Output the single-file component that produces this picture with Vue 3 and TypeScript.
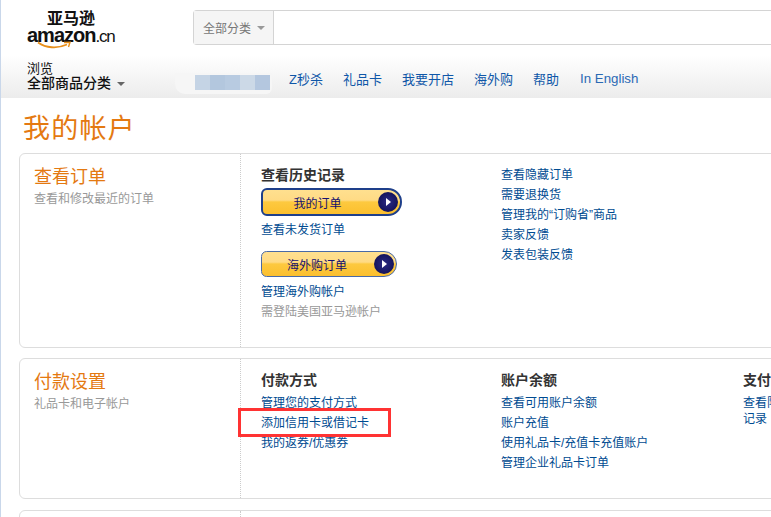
<template>
  <div class="page">
    <header class="header">
      <div class="top-row">
        <div class="logo">
          <div class="logo-cn">亚马逊</div>
          <div class="logo-en">amazon<span class="logo-cnx">.cn</span></div>
          <svg class="smile" width="38" height="9" viewBox="0 0 38 9">
            <path d="M1 1.5C9 7 20 8 30 3.5" fill="none" stroke="#e88f1a" stroke-width="1.8" />
            <path d="M27 1.5L33 1.2L31.5 6" fill="none" stroke="#e88f1a" stroke-width="1.4" />
          </svg>
        </div>
        <div class="search">
          <div class="search-cat">全部分类<i class="caret"></i></div>
          <div class="search-input"></div>
        </div>
      </div>
      <div class="nav-row">
        <div class="browse">
          <div class="browse-small">浏览</div>
          <div class="browse-main">全部商品分类<i class="caret dark"></i></div>
        </div>
        <nav class="nav">
          <a class="nav-first">
            <span class="blur">
              <i v-for="(c, i) in blurCells" :key="i" :style="{ background: c }"></i>
            </span>
          </a>
          <a v-for="item in navItems" :key="item">{{ item }}</a>
        </nav>
      </div>
    </header>

    <h1 class="title">我的帐户</h1>

    <section class="card card-orders">
      <div class="side">
        <h2>查看订单</h2>
        <p>查看和修改最近的订单</p>
      </div>
      <div class="col col-1">
        <h3>查看历史记录</h3>
        <button class="gold-btn big">
          <span>我的订单</span>
          <i class="play"></i>
        </button>
        <a class="link">查看未发货订单</a>
        <button class="gold-btn small">
          <span>海外购订单</span>
          <i class="play"></i>
        </button>
        <a class="link">管理海外购帐户</a>
        <div class="muted">需登陆美国亚马逊帐户</div>
      </div>
      <div class="col col-2 no-head">
        <a v-for="item in orderLinks" :key="item" class="link row">{{ item }}</a>
      </div>
    </section>

    <section class="card card-pay">
      <div class="side">
        <h2>付款设置</h2>
        <p>礼品卡和电子帐户</p>
      </div>
      <div class="col col-1">
        <h3>付款方式</h3>
        <a v-for="item in payLinks" :key="item" class="link row">{{ item }}</a>
      </div>
      <div class="col col-2">
        <h3>账户余额</h3>
        <a v-for="item in balanceLinks" :key="item" class="link row">{{ item }}</a>
      </div>
      <div class="col col-3">
        <h3>支付</h3>
        <a class="link tight">查看限额</a>
        <a class="link tight">记录</a>
      </div>
      <div class="red-box"></div>
    </section>

    <section class="card card-next">
      <div class="side"></div>
    </section>
  </div>
</template>

<script setup lang="ts">
const navItems = ['Z秒杀', '礼品卡', '我要开店', '海外购', '帮助', 'In English']
const blurCells = ['#c5d4e5', '#b3c7de', '#b8cbe1', '#ccd9e7', '#b4c7df']
const orderLinks = ['查看隐藏订单', '需要退换货', '管理我的“订购省”商品', '卖家反馈', '发表包装反馈']
const payLinks = ['管理您的支付方式', '添加信用卡或借记卡', '我的返券/优惠券']
const balanceLinks = ['查看可用账户余额', '账户充值', '使用礼品卡/充值卡充值账户', '管理企业礼品卡订单']
</script>

<style>
html, body { margin: 0; background: #fff; overflow: hidden; }
</style>

<style scoped>
.page {
  position: relative;
  width: 771px;
  height: 517px;
  overflow: hidden;
  background: #fff;
  border-left: 1px solid #c9d7ea;
  box-sizing: border-box;
  font-family: "Liberation Sans", "Noto Sans CJK SC", sans-serif;
  font-size: 12px;
  color: #333;
}

.header {
  height: 98px;
  background: linear-gradient(#fff 0, #fff 55px, #ececec 98px);
}
.top-row { display: flex; height: 58px; padding-left: 26px; box-sizing: border-box; }
.logo { position: relative; width: 166px; padding-top: 12px; color: #111; }
.logo-cn { font-size: 16px; line-height: 14px; padding-left: 20px; font-weight: 700; }
.logo-en { font-size: 20px; line-height: 18px; font-weight: 700; letter-spacing: -1px; }
.logo-cnx { font-weight: 400; font-size: 17px; letter-spacing: -1.2px; }
.smile { position: absolute; left: 10px; top: 41px; }

.search {
  display: flex;
  flex: 1;
  height: 35px;
  margin-top: 10px;
  border: 1px solid #d4d4d4;
  border-right: 0;
  border-radius: 4px 0 0 4px;
  box-sizing: border-box;
}
.search-cat {
  display: flex;
  align-items: center;
  width: 80px;
  padding-left: 9px;
  box-sizing: border-box;
  background: #f5f5f5;
  border-right: 1px solid #d4d4d4;
  color: #777;
  font-size: 12px;
}
.caret {
  display: inline-block;
  margin-left: 6px;
  border: 4px solid transparent;
  border-top: 4px solid #999;
  border-bottom: 0;
}
.caret.dark { border-top-color: #666; margin-top: 2px; }
.search-input { flex: 1; background: #fff; }

.nav-row { display: flex; height: 40px; padding-left: 26px; }
.browse { width: 166px; color: #111; }
.browse-small { font-size: 13px; line-height: 12px; margin-top: 5px; }
.browse-main { display: flex; align-items: center; font-size: 14px; line-height: 18px; margin-top: -1px; font-weight: 500; }

.nav { display: flex; align-items: center; gap: 20px; height: 30px; margin-top: 5px; color: #0f57a8; font-size: 13px; white-space: nowrap; }
.nav a:last-child { font-size: 13.3px; color: #2a69b4; margin-left: 1px; }
.nav-first { position: relative; width: 76px; height: 16px; }
.blur {
  position: absolute;
  left: 2px;
  top: 5px;
  display: flex;
  height: 15px;
}
.blur::before {
  content: "";
  position: absolute;
  left: -20px;
  right: -2px;
  top: -2px;
  bottom: -4px;
  background: #f6f6f6;
  border-radius: 0 0 6px 10px;
}
.blur i { position: relative; display: block; width: 15px; height: 15px; }

.title {
  margin: 15px 0 0 22px;
  font-family: "Liberation Serif", "Noto Sans CJK SC", serif;
  font-size: 27px;
  line-height: 32px;
  font-weight: 400;
  letter-spacing: 1.2px;
  color: #e47911;
}

.card {
  position: relative;
  display: flex;
  width: 790px;
  margin-left: 18px;
  border: 1px solid #ddd;
  border-radius: 6px;
  box-sizing: border-box;
}
.card-orders { height: 195px; margin-top: 8px; }
.card-pay { height: 141px; margin-top: 10px; }
.card-next { height: 40px; margin-top: 11px; }

.side {
  width: 221px;
  flex: none;
  height: 100%;
  box-sizing: border-box;
  padding: 10px 0 0 14px;
  border-right: 1px dotted #ccc;
}
.side h2 { margin: 0; font-size: 18px; line-height: 26px; font-weight: 400; color: #e47911; }
.side p { margin: 0; font-size: 12px; line-height: 18px; color: #999; }

.col { display: flex; flex-direction: column; align-items: flex-start; padding-top: 11px; box-sizing: border-box; flex: none; }
.col-1 { width: 260px; padding-left: 20px; }
.col-2 { width: 242px; }
.col h3 { margin: 0 0 3px; font-size: 14px; line-height: 20px; font-weight: 700; color: #333; }
.col-3 h3 { margin-bottom: 5px; }

.link { color: #004b91; font-size: 12px; line-height: 18px; }
.row { height: 20px; line-height: 20px; }
.no-head { padding-top: 11px; }
.tight { line-height: 16px; }
.muted { color: #999; line-height: 20px; margin-top: 1px; }

.gold-btn {
  display: flex;
  align-items: center;
  justify-content: center;
  position: relative;
  padding: 0 28px 0 0;
  border-radius: 6px 14px 14px 6px;
  background: linear-gradient(#ffe08f 0, #ffdb85 42%, #fdc93f 50%, #fbbf2e 100%);
  font-family: inherit;
  font-size: 12px;
  color: #16106e;
  box-sizing: border-box;
}
.gold-btn.big { width: 141px; height: 28px; border: 2px solid #1e3f8a; margin-bottom: 5px; }
.gold-btn.small { width: 136px; height: 26px; border: 1px solid #4a6aa5; margin-top: 12px; margin-bottom: 6px; padding-right: 24px; }
.play {
  position: absolute;
  right: 2px;
  top: 50%;
  width: 20px;
  height: 20px;
  margin-top: -10px;
  border-radius: 50%;
  background: radial-gradient(circle at 50% 50%, #2b2a85, #0b0b4a);
}
.play::after {
  content: "";
  position: absolute;
  left: 8px;
  top: 6px;
  border-left: 5px solid #fff;
  border-top: 4px solid transparent;
  border-bottom: 4px solid transparent;
}

.red-box {
  position: absolute;
  left: 218px;
  top: 49px;
  width: 153px;
  height: 29px;
  border: 3px solid #ff3333;
  box-sizing: border-box;
}
</style>
